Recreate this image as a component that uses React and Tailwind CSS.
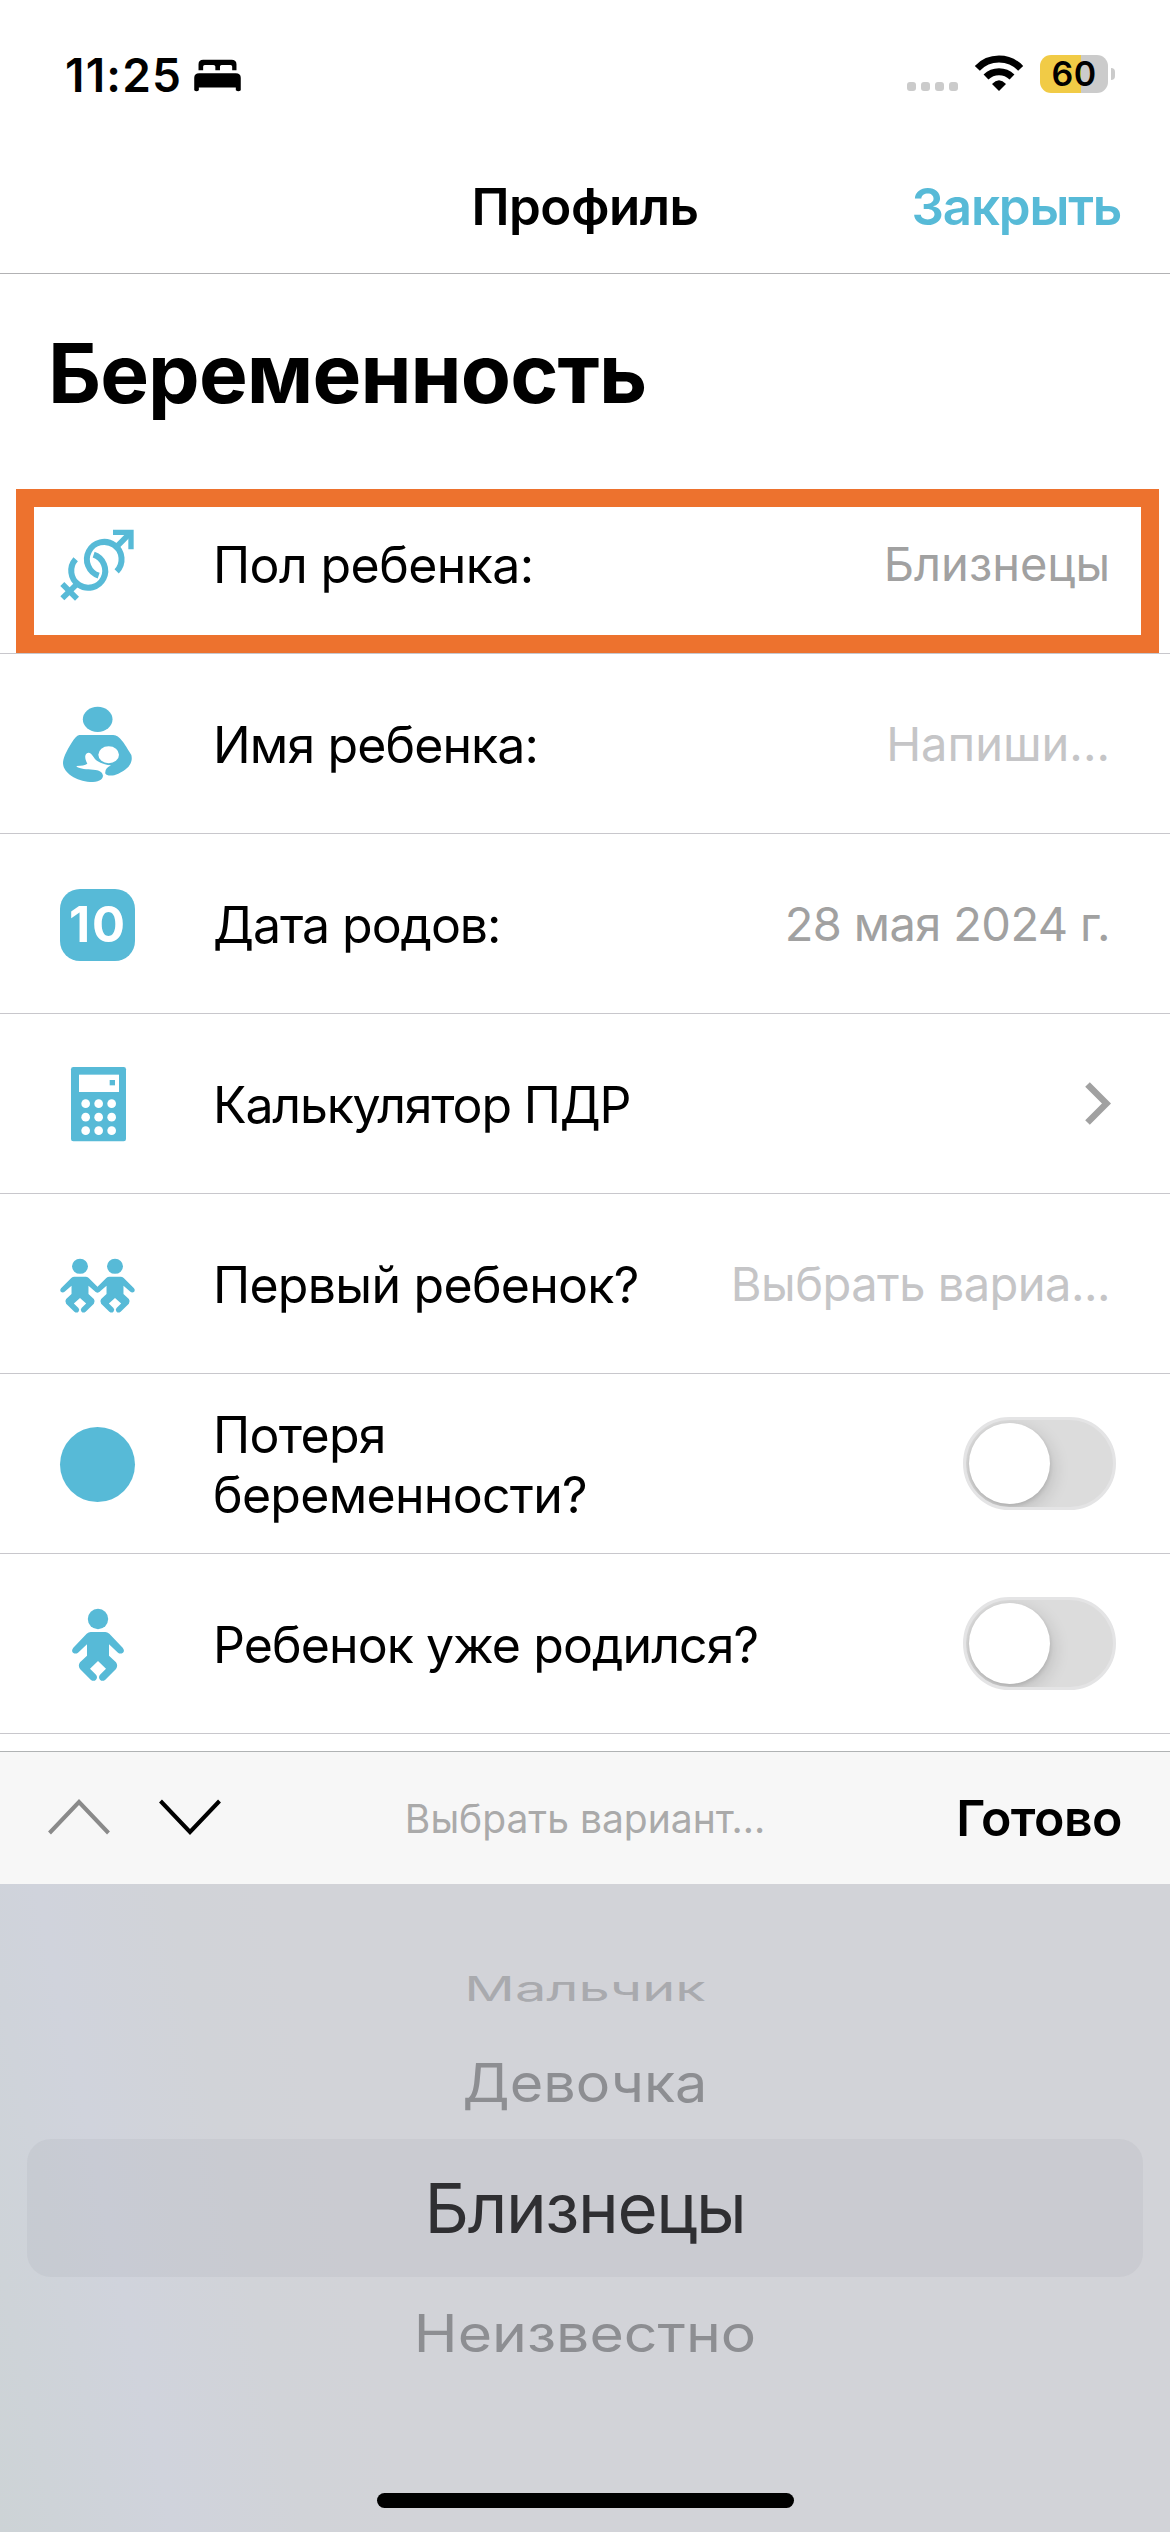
const BLUE = "#57bad7";

const BABY =
  "M182 696 H226 Q232 696 238 701 L278 743 Q285 752 279 758 Q271 763 264 758 L237 733 V767 L258 787 Q265 797 258 807 L226 839 Q217 846 210 839 Q204 831 210 824 L228 806 L204 783 L180 806 L198 824 Q204 831 198 839 Q191 846 182 839 L150 807 Q143 797 150 787 L171 767 V733 L144 758 Q137 763 129 758 Q123 752 130 743 L170 701 Q176 696 182 696Z";

function Icon({ viewBox, children }) {
  return (
    <svg viewBox={viewBox} className="block h-[75px] w-[75px] overflow-visible" fill={BLUE}>
      {children}
    </svg>
  );
}

function GenderIcon() {
  return (
    <Icon viewBox="90 78 225 225">
      <g fill="none" stroke={BLUE} strokeWidth="18">
        <path d="M260 214 A52 52 0 1 0 206 227" />
        <path d="M137 178 A51 51 0 1 0 191 164" />
        <path d="M253 147 L300 100" strokeWidth="17" />
        <path d="M249 97 H303 V148" strokeWidth="16" />
        <path d="M148 245 L97 295" strokeWidth="17" />
        <path d="M97 252 L141 296" strokeWidth="17" />
      </g>
    </Icon>
  );
}

function NursingIcon() {
  return (
    <Icon viewBox="90 78 225 225">
      <ellipse cx="203" cy="118" rx="44.500" ry="38" />
      <path d="M148 165 H250 C265 167 275 175 304 225 C309 245 300 265 265 281 C250 288 238 288 230 284 C228 283 226 280 224 278 L219 288 C217 300 205 306 180 306 C140 303 100 280 99 250 C99 235 108 215 125 188 C133 175 140 167 148 165Z" />
      <ellipse cx="236" cy="224" rx="31" ry="25.500" fill="white" />
      <path
        d="M140 258 C155 257 165 256 172 251 C163 235 163 220 175 218 C186 217 190 235 202 243 C215 251 228 255 243 256 C232 262 226 268 226 276 C226 283 222 287 219 288 C218 275 207 270 190 269 C170 268 150 266 140 260Z"
        fill="white"
      />
    </Icon>
  );
}

function CalendarIcon() {
  return (
    <div className="mt-[3px] flex h-[72px] w-[75px] items-center justify-center rounded-[20px] bg-[#57bad7] text-[49px] leading-none font-bold tracking-[2px] text-white">
      <span className="pb-px pl-px">10</span>
    </div>
  );
}

function CalculatorIcon() {
  return (
    <Icon viewBox="90 618 225 225">
      <rect x="123" y="621" width="165" height="223" rx="7" />
      <rect x="147" y="644" width="120" height="52" fill="white" />
      <rect x="239" y="660" width="16" height="16" />
      {[731, 771.5, 812].map((y) =>
        [167, 206, 245].map((x) => <circle key={`${x}-${y}`} cx={x} cy={y} r="13" fill="white" />)
      )}
    </Icon>
  );
}

function TwinsIcon() {
  return (
    <Icon viewBox="90 48 225 225">
      {[150, 255].map((x) => (
        <g key={x}>
          <ellipse cx={x} cy="109" rx="24" ry="22.500" />
          <path d={BABY} transform={`translate(${x} 140) scale(0.77 0.735) translate(-204 -696)`} />
        </g>
      ))}
    </Icon>
  );
}

function DotIcon() {
  return <div className="mt-[2px] h-[75px] w-[75px] rounded-full bg-[#57bad7]" />;
}

function BabyIcon() {
  return (
    <Icon viewBox="90 618 225 225">
      <circle cx="204" cy="657" r="30.500" />
      <path d={BABY} />
    </Icon>
  );
}

function Row({ icon, children, right, highlighted }) {
  return (
    <div className="relative flex h-[180px] items-center border-b border-[#c8c7cc] pl-[60px]">
      {icon}
      <div className="ml-[78px] pt-[2px] text-[50px] leading-[60px] whitespace-nowrap">{children}</div>
      <div className="ml-auto">{right}</div>
      {highlighted && (
        <div className="absolute top-[15px] left-[16px] h-[164px] w-[1143px] border-[18px] border-[#ed722e]" />
      )}
    </div>
  );
}

function Value({ className, children }) {
  return <div className={`pr-[60px] text-[47px] leading-[60px] whitespace-nowrap ${className}`}>{children}</div>;
}

function Toggle() {
  return (
    <div className="mr-[54px] h-[93px] w-[153px] overflow-hidden rounded-full border-[3px] border-[#e4e4e5] bg-[#dcdcdc] p-[3px]">
      <div className="h-[81px] w-[81px] rounded-full bg-white shadow-[3px_6px_18px_rgba(0,0,0,0.14),0_2px_4px_rgba(0,0,0,0.12)]" />
    </div>
  );
}

function StatusBar() {
  return (
    <div className="flex h-[150px] items-center pr-[55px] pl-[65px]">
      <span className="text-[46px] leading-none font-semibold tracking-[1.2px]">11:25</span>
      <svg viewBox="585 85 141 100" className="ml-[12px] h-[33px] w-[47px]">
        <path d="M598 119 V101 Q598 87 612 87 H698 Q713 87 713 101 V119 H700 V108 Q700 103 695 103 H668 Q663 103 663 108 V119 H649 V108 Q649 103 643 103 H617 Q612 103 612 108 V119Z" />
        <path d="M585 180 V142 Q585 128 600 128 H711 Q726 128 726 142 V180 Q719 186 711 180 V171 H599 V180 Q592 186 585 180Z" />
      </svg>
      <div className="mt-[23px] ml-auto flex gap-[5px]">
        <i className="h-[9px] w-[9px] rounded-[3px] bg-[#cbcbcb]" />
        <i className="h-[9px] w-[9px] rounded-[3px] bg-[#cbcbcb]" />
        <i className="h-[9px] w-[9px] rounded-[3px] bg-[#cbcbcb]" />
        <i className="h-[9px] w-[9px] rounded-[3px] bg-[#cbcbcb]" />
      </div>
      <svg viewBox="585 75 144 108" className="mt-[-4px] ml-[17px] h-[36px] w-[48px] overflow-visible">
        <g fill="none" stroke="black">
          <path d="M592 115 A90 90 0 0 1 722 115" strokeWidth="21" />
          <path d="M618 141 A56 56 0 0 1 696 141" strokeWidth="21" />
        </g>
        <path d="M657 183 L636 162 Q657 140 678 162Z" />
      </svg>
      <div className="mt-[-2px] ml-[17px] flex items-center gap-[3px]">
        <div className="flex h-[38px] w-[68px] items-center justify-center rounded-[11px] bg-[linear-gradient(to_right,#f1cb46_41px,#cbcbcb_41px)] text-[34px] leading-none font-semibold tracking-[0.5px]">
          60
        </div>
        <div className="h-[12px] w-[4px] rounded-r-full bg-[#cbcbcb]" />
      </div>
    </div>
  );
}

export default function App() {
  return (
    <div className="flex h-[2532px] w-[1170px] flex-col overflow-hidden bg-white font-['Inter','Liberation_Sans',sans-serif] text-black">
      <StatusBar />
      <header className="flex h-[124px] items-center border-b border-[#b2b2b4] pr-[49px] pb-[10px] pl-[49px] text-[51px] leading-none font-semibold">
        <div className="flex-1" />
        <h1 className="tracking-[-0.5px]">Профиль</h1>
        <div className="flex-1 text-right tracking-[-1.2px] text-[#57bad7]">Закрыть</div>
      </header>

      <h2 className="flex h-[200px] items-center pl-[48px] text-[82px] leading-none font-bold tracking-[-0.9px]">
        Беременность
      </h2>

      <Row icon={<GenderIcon />} highlighted right={<Value className="text-[#a1a1a1]">Близнецы</Value>}>
        <span className="tracking-[-0.6px]">Пол ребенка:</span>
      </Row>
      <Row icon={<NursingIcon />} right={<Value className="text-[#c5c5c7]">Напиши...</Value>}>
        <span className="tracking-[-0.88px]">Имя ребенка:</span>
      </Row>
      <Row
        icon={<CalendarIcon />}
        right={<Value className="tracking-[-0.6px] text-[#a1a1a1]">28 мая 2024 г.</Value>}
      >
        <span className="tracking-[-1.07px]">Дата родов:</span>
      </Row>
      <Row
        icon={<CalculatorIcon />}
        right={
          <svg viewBox="0 0 26 43" className="mr-[59px] h-[43px] w-[26px]" fill="none">
            <path d="M2.500 2.500 L21.500 21.500 L2.500 40.500" stroke="#a1a1a1" strokeWidth="6.500" />
          </svg>
        }
      >
        <span className="tracking-[-1.18px]">Калькулятор ПДР</span>
      </Row>
      <Row
        icon={<TwinsIcon />}
        right={<Value className="tracking-[-0.52px] text-[#c5c5c7]">Выбрать вариа...</Value>}
      >
        <span className="tracking-[-0.72px]">Первый ребенок?</span>
      </Row>
      <Row icon={<DotIcon />} right={<Toggle />}>
        <span className="tracking-[-0.7px]">
          Потеря
          <br />
          беременности?
        </span>
      </Row>
      <Row icon={<BabyIcon />} right={<Toggle />}>
        <span className="tracking-[-0.9px]">Ребенок уже родился?</span>
      </Row>
      <div className="h-[17px]" />

      <div className="flex h-[133px] items-center border-t border-[#b0b3b4] bg-[#f7f7f7] px-[48px]">
        <div className="flex flex-1 gap-[49px] pb-[3px]">
          <svg viewBox="0 0 62 36" className="h-[36px] w-[62px]" fill="none">
            <path d="M1.500 34 L31 3 L60.500 34" stroke="#8a8a8a" strokeWidth="4" />
          </svg>
          <svg viewBox="0 0 62 36" className="h-[36px] w-[62px]" fill="none">
            <path d="M1.500 2 L31 33 L60.500 2" stroke="black" strokeWidth="4" />
          </svg>
        </div>
        <div className="text-[39px] leading-none text-[#aaaaaa]">Выбрать вариант...</div>
        <div className="flex-1 text-right text-[50px] leading-none font-semibold tracking-[-0.5px]">Готово</div>
      </div>

      <div className="flex flex-1 flex-col items-center bg-[#d2d3d8] bg-[linear-gradient(78deg,#cdd3d6,#d0d3dc_170px,#d1d3d8_300px,#d2d3d8_400px)] pt-[68px] leading-none whitespace-nowrap">
        <div className="flex h-[74px] items-center text-[56px] text-[#a9aaae]">
          <span className="block scale-y-[0.61]">Мальчик</span>
        </div>
        <div className="flex h-[113px] items-center text-[57.5px] text-[#8d8e92]">
          <span className="block scale-y-[0.93]">Девочка</span>
        </div>
        <div className="flex h-[138px] w-[1116px] items-center justify-center rounded-[24px] bg-[#747480]/8 text-[69px] tracking-[-1.4px] text-[#2f2f32]">
          Близнецы
        </div>
        <div className="flex h-[112px] items-center text-[59px] text-[#8d8e92]">
          <span className="block scale-y-[0.88]">Неизвестно</span>
        </div>
        <div className="mt-auto mb-[24px] h-[15px] w-[417px] rounded-full bg-black" />
      </div>
    </div>
  );
}
